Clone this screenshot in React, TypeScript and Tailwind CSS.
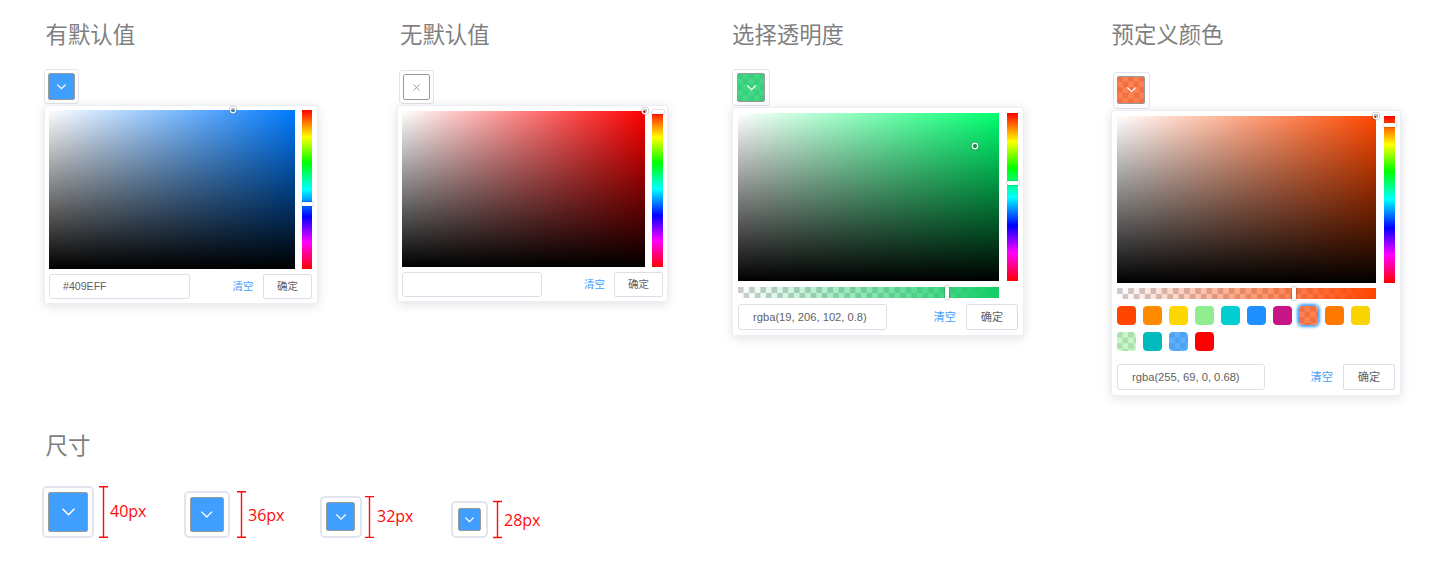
import React from "react";
import clsx from "clsx";

const CHECKER =
  "bg-[conic-gradient(#fff_25%,#ccc_0_50%,#fff_0_75%,#ccc_0)] bg-[length:11.2px_11.2px]";
const HUE =
  "bg-[linear-gradient(to_bottom,#f00_0%,#ff0_17%,#0f0_33%,#0ff_50%,#00f_67%,#f0f_83%,#f00_100%)]";

function Heading({ className, children }: { className?: string; children: React.ReactNode }) {
  return (
    <h2 className={clsx("h-[34px] whitespace-nowrap text-[22.4px] leading-[34px] text-[#7f7f7f]", className)}>
      {children}
    </h2>
  );
}

function Chevron({ className }: { className: string }) {
  return (
    <svg viewBox="0 0 10 6" className={clsx("overflow-visible", className)} fill="none" stroke="#fff" strokeWidth="1.2">
      <path d="M0.4 0.5 L5 5.1 L9.6 0.5" />
    </svg>
  );
}

function Trigger({
  box,
  inner,
  fill,
  checker,
  children,
}: {
  box: string;
  inner: string;
  fill: string;
  checker?: boolean;
  children: React.ReactNode;
}) {
  return (
    <div className={clsx("shrink-0 border-[#e3e5ee] bg-white", box)}>
      <div className={clsx("overflow-hidden rounded-[2px]", inner, checker && CHECKER)}>
        <div className={clsx("flex h-full w-full items-center justify-center rounded-[2px] border border-[#999]", fill)}>
          {children}
        </div>
      </div>
    </div>
  );
}

interface PanelProps {
  panel: string;
  field: string;
  fieldColor: string;
  cursor: string;
  hue: string;
  hueThumb: string;
  alpha?: string;
  alphaFill?: string;
  alphaThumb?: string;
  footer: string;
  input: string;
  text: string;
  clear: string;
  button: string;
  value: string;
  children?: React.ReactNode;
}

function Panel(p: PanelProps) {
  return (
    <div
      className={clsx(
        "rounded-[3px] border border-[#ebeef5] bg-white shadow-[0_2px_11px_rgba(0,0,0,0.12)]",
        p.panel
      )}
    >
      <div className="flex justify-between">
        <div className={clsx("relative", p.field, p.fieldColor)}>
          <div className="absolute inset-0 bg-[linear-gradient(to_right,#fff,rgba(255,255,255,0))]" />
          <div className="absolute inset-0 bg-[linear-gradient(to_top,#000,rgba(0,0,0,0))]" />
          <div
            className={clsx(
              "absolute h-[4px] w-[4px] rounded-full bg-black/30 shadow-[0_0_0_1.4px_#fff,0_0_1px_2px_rgba(0,0,0,0.3)]",
              p.cursor
            )}
          />
        </div>
        <div className={clsx("relative", HUE, p.hue)}>
          <div
            className={clsx(
              "absolute inset-x-[-0.5px] h-[4px] rounded-[1px] bg-white shadow-[0_0_1.5px_rgba(0,0,0,0.6)]",
              p.hueThumb
            )}
          />
        </div>
      </div>
      {p.alpha && (
        <div className={clsx("relative", CHECKER, p.alpha)}>
          <div className={clsx("absolute inset-0", p.alphaFill)} />
          <div
            className={clsx(
              "absolute -bottom-px -top-px w-[4px] rounded-[1px] bg-white shadow-[0_0_2px_rgba(0,0,0,0.6)]",
              p.alphaThumb
            )}
          />
        </div>
      )}
      {p.children}
      <div className={clsx("flex items-center", p.footer, p.text)}>
        <div className={clsx("flex h-full items-center rounded-[3px] border border-[#dcdfe6] text-[#606266]", p.input)}>
          {p.value}
        </div>
        <div className={clsx("ml-auto text-[#409eff]", p.clear)}>清空</div>
        <div
          className={clsx(
            "flex h-full items-center justify-center rounded-[2px] border border-[#dcdfe6] text-[#606266]",
            p.button
          )}
        >
          确定
        </div>
      </div>
    </div>
  );
}

const swatches = [
  "bg-[#ff4500]",
  "bg-[#ff8c00]",
  "bg-[#ffd700]",
  "bg-[#90ee90]",
  "bg-[#00ced1]",
  "bg-[#1e90ff]",
  "bg-[#c71585]",
  "bg-[rgba(255,69,0,0.68)]",
  "bg-[#ff7800]",
  "bg-[#fad400]",
  "bg-[rgba(144,240,144,0.5)]",
  "bg-[#00babd]",
  "bg-[rgba(31,147,255,0.73)]",
  "bg-[#ff0000]",
];

function Swatches() {
  return (
    <div className="-ml-[0.5px] mt-[7px] grid grid-cols-[repeat(10,19px)] gap-[7px]">
      {swatches.map((color, i) => (
        <div
          key={color}
          className={clsx(
            "h-[19px] w-[19px] overflow-hidden rounded-[4px]",
            color.includes("rgba") && CHECKER,
            i === 7 && "shadow-[0_0_3px_2px_#409eff]"
          )}
        >
          <div className={clsx("h-full w-full rounded-[3px]", color)} />
        </div>
      ))}
    </div>
  );
}

function SizeItem({
  item,
  box,
  inner,
  icon,
  bracket,
  text,
  label,
}: {
  item: string;
  box: string;
  inner: string;
  icon: string;
  bracket: string;
  text: string;
  label: string;
}) {
  return (
    <div className={clsx("flex items-end", item)}>
      <Trigger box={clsx("rounded-[5px] border-2", box)} inner={inner} fill="bg-[#409eff]">
        <Chevron className={icon} />
      </Trigger>
      <div className={clsx("flex items-center", bracket)}>
        <svg
          viewBox="0 0 9 40"
          preserveAspectRatio="none"
          className="h-full w-[9px] overflow-visible"
          fill="none"
          stroke="#ff0a0a"
          strokeWidth="1.4"
        >
          <path vectorEffect="non-scaling-stroke" d="M0 0.6 H9 M0 39.4 H9 M4.5 0.6 V39.4" />
        </svg>
        <span className={clsx("font-['Open_Sans',sans-serif] text-[16px] leading-5 text-[#ff0a0a]", text)}>
          {label}
        </span>
      </div>
    </div>
  );
}

export default function App() {
  return (
    <main className="h-[588px] w-[1435px] overflow-hidden bg-white font-['Liberation_Sans','Noto_Sans_CJK_SC',sans-serif]">
      <div className="flex h-[429px] items-start pl-[44px] pt-[19px]">
        <section className="w-[353px]">
          <Heading className="ml-[1.5px]">有默认值</Heading>
          <Trigger
            box="mt-[16px] h-[35px] w-[35px] rounded-[3px] border p-[3px]"
            inner="h-[27px] w-[27px]"
            fill="bg-[#409eff]"
          >
            <Chevron className="h-[5.5px] w-[9px]" />
          </Trigger>
          <Panel
            panel="mt-px h-[199px] w-[274px] pl-[4px] pr-[5px] pt-[4px]"
            field="h-[159px] w-[246px]"
            fieldColor="bg-[#007bff]"
            cursor="left-[182px] -top-[2px]"
            hue="h-[159px] w-[10px]"
            hueThumb="top-[91.5px]"
            footer="mt-[5px] h-[25px]"
            input="w-[141px] pl-[13px]"
            text="text-[10.6px]"
            clear="mr-[9.5px] text-[10.5px]"
            button="w-[49px] text-[10.5px]"
            value="#409EFF"
          />
        </section>

        <section className="w-[335px]">
          <Heading className="ml-[3px]">无默认值</Heading>
          <Trigger
            box="ml-[2px] mt-[17px] h-[34px] w-[35px] rounded-[3px] border p-[3px]"
            inner="h-[26px] w-[27px]"
            fill="bg-white"
          >
            <svg viewBox="0 0 8 8" className="h-[7px] w-[7px]" fill="none" stroke="#999" strokeWidth="1.1">
              <path d="M0.5 0.5 L7.5 7.5 M7.5 0.5 L0.5 7.5" />
            </svg>
          </Trigger>
          <Panel
            panel="mt-px h-[197px] w-[271px] pl-[4px] pr-[4px] pt-[5px]"
            field="h-[156px] w-[243px]"
            fieldColor="bg-[#ff0000]"
            cursor="-right-[2px] -top-[2px]"
            hue="h-[156px] w-[11px]"
            hueThumb="-top-[1px]"
            footer="mt-[5px] h-[25px]"
            input="w-[140px] pl-[13px]"
            text="text-[10.6px]"
            clear="mr-[9px] text-[10.5px]"
            button="w-[49px] text-[10.5px]"
            value=""
          />
        </section>

        <section className="w-[379px]">
          <Heading>选择透明度</Heading>
          <Trigger
            box="mt-[16px] h-[37px] w-[38px] rounded-[3px] border px-[4px] py-[3px]"
            inner="h-[29px] w-[28px]"
            fill="bg-[rgba(19,206,102,0.8)]"
            checker
          >
            <Chevron className="h-[5.5px] w-[9px]" />
          </Trigger>
          <Panel
            panel="mt-px h-[229px] w-[292px] px-[5px] pt-[5px]"
            field="h-[168px] w-[261px]"
            fieldColor="bg-[#00ff6f]"
            cursor="left-[235px] top-[31px]"
            hue="h-[168px] w-[11px]"
            hueThumb="top-[68px]"
            alpha="mt-[6px] h-[11px] w-[261px]"
            alphaFill="bg-[linear-gradient(to_right,rgba(19,206,102,0),rgb(19,206,102))]"
            alphaThumb="left-[207px]"
            footer="mt-[6px] h-[26px]"
            input="w-[149px] pl-[14px]"
            text="text-[11.2px]"
            clear="mr-[10px] text-[11.2px]"
            button="w-[52px] text-[11.2px]"
            value="rgba(19, 206, 102, 0.8)"
          />
        </section>

        <section>
          <Heading className="ml-[0.5px]">预定义颜色</Heading>
          <Trigger
            box="ml-[2px] mt-[19px] h-[37px] w-[37px] rounded-[3px] border pl-[3px] pt-[3px]"
            inner="h-[28px] w-[28px]"
            fill="bg-[rgba(255,69,0,0.68)]"
            checker
          >
            <Chevron className="h-[5.5px] w-[9px]" />
          </Trigger>
          <Panel
            panel="mt-px h-[286px] w-[290px] pl-[5px] pr-[5px] pt-[5px]"
            field="h-[167px] w-[259px]"
            fieldColor="bg-[#ff4800]"
            cursor="-right-[2px] -top-[2px]"
            hue="h-[167px] w-[11px]"
            hueThumb="top-[7px]"
            alpha="mt-[5px] h-[11px] w-[259px]"
            alphaFill="bg-[linear-gradient(to_right,rgba(255,69,0,0),rgb(255,69,0))]"
            alphaThumb="left-[175px]"
            footer="mt-[13px] h-[26px]"
            input="w-[148px] pl-[14px]"
            text="text-[11.2px]"
            clear="mr-[10px] text-[11.2px]"
            button="w-[52px] text-[11.2px]"
            value="rgba(255, 69, 0, 0.68)"
          >
            <Swatches />
          </Panel>
        </section>
      </div>

      <section className="pl-[42px]">
        <Heading className="ml-[3.5px] pt-px">尺寸</Heading>
        <div className="mt-[23px] flex h-[52px] items-end">
          <SizeItem
            item="w-[142px]"
            box="h-[52px] w-[52px] p-[4px]"
            inner="h-[40px] w-[40px]"
            icon="h-[8px] w-[13px]"
            bracket="ml-[5px] h-[52px]"
            text="-mt-[3px] ml-[2px]"
            label="40px"
          />
          <SizeItem
            item="w-[136px]"
            box="h-[47px] w-[46px] p-[4px]"
            inner="h-[35px] w-[34px]"
            icon="h-[7px] w-[11.5px]"
            bracket="ml-[7px] h-[47px]"
            text="ml-[2px]"
            label="36px"
          />
          <SizeItem
            item="w-[131px]"
            box="h-[42px] w-[42px] pl-[4px] pt-[4px]"
            inner="h-[29px] w-[29px]"
            icon="h-[6px] w-[10px]"
            bracket="ml-[3px] h-[42px]"
            text="-mt-[3px] ml-[3px]"
            label="32px"
          />
          <SizeItem
            item=""
            box="h-[37px] w-[37px] p-[5px]"
            inner="h-[23px] w-[23px]"
            icon="h-[5.5px] w-[9px]"
            bracket="ml-[5px] h-[37px]"
            text="ml-[2px]"
            label="28px"
          />
        </div>
      </section>
    </main>
  );
}
